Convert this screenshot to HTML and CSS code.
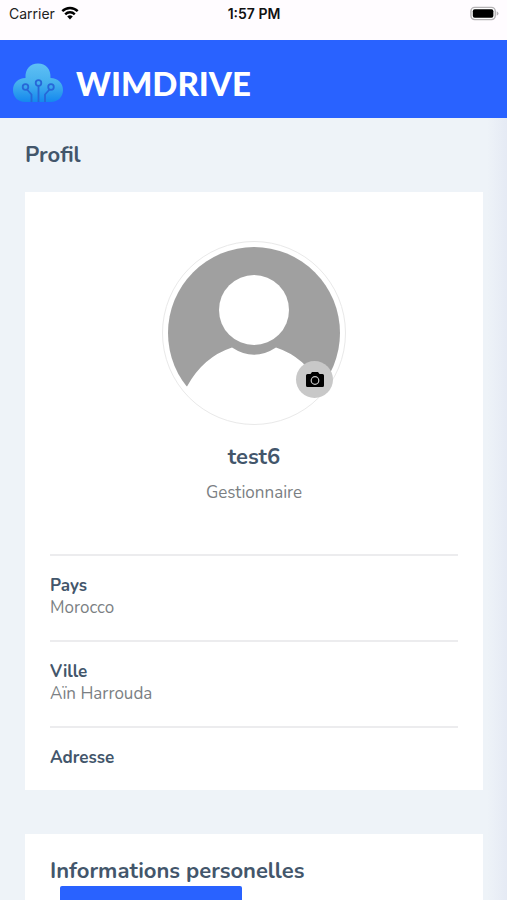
FILE: index.html
```html
<!DOCTYPE html>
<html lang="fr">
<head>
<meta charset="utf-8">
<meta name="viewport" content="width=device-width, initial-scale=1">
<title>Wimdrive</title>
<link rel="stylesheet" href="styles.css">
</head>
<body>
<div class="status">
  <div class="status-left">
    <span>Carrier</span>
    <svg class="wifi" viewBox="0 0 18 14" aria-hidden="true">
      <path d="M1.3 5.2a10.9 10.9 0 0 1 15.4 0M4.2 8.3a6.8 6.8 0 0 1 9.6 0" fill="none" stroke="#000" stroke-width="2.4"/>
      <path d="M6.2 10.6a4 4 0 0 1 5.6 0L9 13.6z"/>
    </svg>
  </div>
  <span class="clock">1:57 PM</span>
  <div class="status-right">
    <svg class="battery" viewBox="0 0 31 15" aria-hidden="true">
      <rect x="1" y="1" width="26" height="13" rx="4" fill="#fff" stroke="#b5b2b5" stroke-width="1.5"/>
      <rect x="3" y="3" width="22" height="9" rx="2"/>
      <path d="M28.5 5q2 1 2 2.500t-2 2.500z" fill="#b5b2b5"/>
    </svg>
  </div>
</div>
<header class="topbar">
  <a class="brand" href="#">
    <svg class="logo" viewBox="0 0 52 42" aria-hidden="true">
      <defs>
        <linearGradient id="cloud" x1="0" y1="0" x2="0" y2="1">
          <stop offset="0" stop-color="#5fc0f5"/>
          <stop offset=".5" stop-color="#45b0ee"/>
          <stop offset="1" stop-color="#1488ee"/>
        </linearGradient>
      </defs>
      <path d="M13.500 16C13 7 18 1.500 26 1.500S39 7 38.500 16C46 16 51 21 51 28S46 40 39 40H13C6 40 1 35 1 28S6 16 13.500 16z" fill="url(#cloud)"/>
      <g fill="none" stroke="#2767d8" stroke-width="1.800">
        <circle cx="13.500" cy="25" r="2.800"/>
        <circle cx="26.500" cy="21" r="2.800"/>
        <circle cx="39" cy="25" r="2.800"/>
        <path d="M15 27.500l4.500 5V40M26.500 24v16M37.500 27.500l-4.500 5V40"/>
      </g>
    </svg>
    <span>WIMDRIVE</span>
  </a>
</header>
<main class="content">
  <h1 class="title">Profil</h1>
  <section class="card profile">
    <div class="avatar">
      <svg class="portrait" viewBox="0 0 172 172" aria-hidden="true">
        <defs><clipPath id="disc"><circle cx="86" cy="86" r="86"/></clipPath></defs>
        <path d="M0 0H172V139.500H153Q137 110 108 100.500Q86 115 64 100.500Q35 110 19 139.500H0z" fill="#a0a0a0" clip-path="url(#disc)"/>
        <circle cx="86" cy="63" r="35" fill="#fff"/>
      </svg>
      <button class="photo" type="button" aria-label="Changer la photo">
        <svg viewBox="0 0 20 18" aria-hidden="true">
          <path d="M2.500 3H5.500L7 1H13L14.500 3H17.500Q19 3 19 4.500V14.500Q19 16 17.500 16H2.500Q1 16 1 14.500V4.500Q1 3 2.500 3z"/>
          <circle cx="10" cy="9.500" r="3.800" fill="none" stroke="#c8c8c8" stroke-width="1.200"/>
        </svg>
      </button>
    </div>
    <h2 class="name">test6</h2>
    <p class="role">Gestionnaire</p>
    <dl class="details">
      <div class="row"><dt>Pays</dt><dd>Morocco</dd></div>
      <div class="row"><dt>Ville</dt><dd>Aïn Harrouda</dd></div>
      <div class="row"><dt>Adresse</dt></div>
    </dl>
  </section>
  <section class="card info">
    <h2 class="heading">Informations personelles</h2>
    <button class="action" type="button" aria-label="Modifier"></button>
  </section>
</main>
</body>
</html>
```
FILE: styles.css
```css
* { box-sizing: border-box; }
body {
  margin: 0;
  height: 100vh;
  display: flex;
  flex-direction: column;
  font-family: Nunito, Lato, sans-serif;
  color: #43566b;
  background: #eef3f8;
}
h1, h2, p, dl, dd { margin: 0; }
.status {
  flex: none;
  display: grid;
  grid-template-columns: 1fr auto 1fr;
  height: 40px;
  padding: 4px 8px 0 9px;
  line-height: 20px;
  background: #fffcff;
  color: #222;
  font-family: Inter, sans-serif;
  font-size: 14px;
}
.status-left { display: flex; gap: 6px; }
.wifi { width: 18px; height: 14px; margin-top: 2px; }
.clock { font-weight: 600; color: #111; }
.status-right { display: flex; justify-content: flex-end; }
.battery { width: 29px; height: 15px; margin-top: 2px; }
.topbar {
  flex: none;
  display: flex;
  align-items: center;
  height: 78px;
  padding: 8px 12px 0;
  background: #2962ff;
}
.brand {
  display: flex;
  align-items: center;
  gap: 12px;
  color: #fff;
  font-family: Lato, sans-serif;
  font-size: 33px;
  font-weight: 900;
  line-height: 42px;
  text-decoration: none;
}
.logo { width: 52px; height: 42px; }
.content {
  flex: 1;
  min-height: 0;
  overflow-y: auto;
  scrollbar-width: none;
  padding: 22px 24px 24px 25px;
  background: linear-gradient(to left, #e5eaf4, #eef3f8 20px);
}
.title { margin-bottom: 22px; font-size: 22px; line-height: 30px; font-weight: 700; }
.card { padding: 0 25px; background: #fff; }
.profile { padding-top: 49px; margin-bottom: 44px; }
.avatar {
  position: relative;
  width: 184px;
  height: 184px;
  margin: 0 auto;
  padding: 5px;
  border: 1px solid #e9e9e9;
  border-radius: 50%;
}
.portrait { display: block; width: 100%; }
.photo {
  position: absolute;
  right: 12px;
  bottom: 26px;
  display: grid;
  place-items: center;
  width: 37px;
  height: 37px;
  padding: 0;
  border: 0;
  border-radius: 50%;
  background: #c8c8c8;
}
.photo svg { width: 20px; height: 18px; }
.name { margin-top: 17px; font-size: 22px; line-height: 30px; text-align: center; }
.role { margin: 10px 0 50px; font-size: 17px; line-height: 22px; text-align: center; color: #7b7f83; }
.row { padding: 19px 0 21px; border-top: 2px solid #ececee; font-size: 17px; line-height: 22px; }
.row dt { font-weight: 700; }
.row dd { color: #7b7f83; }
.info { padding-top: 22px; padding-bottom: 24px; }
.heading { font-size: 22px; line-height: 30px; }
.action {
  display: block;
  width: 182px;
  height: 40px;
  margin-left: 10px;
  border: 0;
  border-radius: 2px;
  background: #2962ff;
}
```
